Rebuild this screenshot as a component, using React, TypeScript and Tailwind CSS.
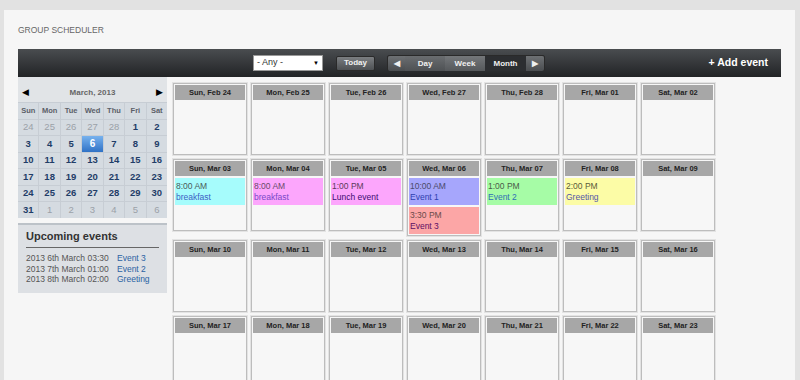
import React from "react"

type Ev = { time: string; name: string; bg: string; tc: string; nc: string }

const weeks: { label: string; events?: Ev[] }[][] = [
  [
    { label: "Sun, Feb 24" },
    { label: "Mon, Feb 25" },
    { label: "Tue, Feb 26" },
    { label: "Wed, Feb 27" },
    { label: "Thu, Feb 28" },
    { label: "Fri, Mar 01" },
    { label: "Sat, Mar 02" },
  ],
  [
    { label: "Sun, Mar 03", events: [{ time: "8:00 AM", name: "breakfast", bg: "bg-[#a6fcfc]", tc: "text-[#4a5a5a]", nc: "text-[#3d5fc4]" }] },
    { label: "Mon, Mar 04", events: [{ time: "8:00 AM", name: "breakfast", bg: "bg-[#fca6fc]", tc: "text-[#6a4a6a]", nc: "text-[#7a48c8]" }] },
    { label: "Tue, Mar 05", events: [{ time: "1:00 PM", name: "Lunch event", bg: "bg-[#fca6fc]", tc: "text-[#5a3a5a]", nc: "text-[#3c0c72]" }] },
    {
      label: "Wed, Mar 06",
      events: [
        { time: "10:00 AM", name: "Event 1", bg: "bg-[#a6a6fc]", tc: "text-[#4a4a6a]", nc: "text-[#2e3fb0]" },
        { time: "3:30 PM", name: "Event 3", bg: "bg-[#fca6a6]", tc: "text-[#6a4a4a]", nc: "text-[#5c1064]" },
      ],
    },
    { label: "Thu, Mar 07", events: [{ time: "1:00 PM", name: "Event 2", bg: "bg-[#a6fca6]", tc: "text-[#4a5a4a]", nc: "text-[#2f6fb4]" }] },
    { label: "Fri, Mar 08", events: [{ time: "2:00 PM", name: "Greeting", bg: "bg-[#fcfca6]", tc: "text-[#5a5a3a]", nc: "text-[#5555a8]" }] },
    { label: "Sat, Mar 09" },
  ],
  [
    { label: "Sun, Mar 10" },
    { label: "Mon, Mar 11" },
    { label: "Tue, Mar 12" },
    { label: "Wed, Mar 13" },
    { label: "Thu, Mar 14" },
    { label: "Fri, Mar 15" },
    { label: "Sat, Mar 16" },
  ],
  [
    { label: "Sun, Mar 17" },
    { label: "Mon, Mar 18" },
    { label: "Tue, Mar 19" },
    { label: "Wed, Mar 20" },
    { label: "Thu, Mar 21" },
    { label: "Fri, Mar 22" },
    { label: "Sat, Mar 23" },
  ],
]

const miniDays = [
  [24, 25, 26, 27, 28, 1, 2],
  [3, 4, 5, 6, 7, 8, 9],
  [10, 11, 12, 13, 14, 15, 16],
  [17, 18, 19, 20, 21, 22, 23],
  [24, 25, 26, 27, 28, 29, 30],
  [31, 1, 2, 3, 4, 5, 6],
]

const upcoming = [
  ["2013 6th March 03:30", "Event 3"],
  ["2013 7th March 01:00", "Event 2"],
  ["2013 8th March 02:00", "Greeting"],
]

function MiniCalendar() {
  return (
    <div className="bg-[#e1e4e7]">
      <div className="h-[25px] flex items-center justify-between px-[4px] pt-[6px]">
        <span className="text-[9px] text-black">◀</span>
        <span className="text-[8px] font-bold text-[#666]">March, 2013</span>
        <span className="text-[9px] text-black">▶</span>
      </div>
      <div className="grid grid-cols-7 gap-px bg-[#c7cdd4] border-t border-[#c7cdd4]">
        {["Sun", "Mon", "Tue", "Wed", "Thu", "Fri", "Sat"].map((d) => (
          <div key={d} className="h-[15.5px] bg-[#d5dbe1] flex items-center justify-center text-[7.5px] font-bold text-[#5b6068]">
            {d}
          </div>
        ))}
        {miniDays.map((row, ri) =>
          row.map((n, ci) => {
            const other = (ri === 0 && n > 20) || (ri === 5 && n < 20)
            const sel = ri === 1 && n === 6
            return (
              <div
                key={ri + "-" + ci}
                className={
                  sel
                    ? "h-[15.5px] flex items-center justify-center text-[10px] font-bold text-white bg-gradient-to-b from-[#78b2ee] to-[#2f72c6]"
                    : other
                    ? "h-[15.5px] flex items-center justify-center text-[9.5px] text-[#9ba1a8] bg-[#d5dbe1]"
                    : "h-[15.5px] flex items-center justify-center text-[9.5px] font-bold text-[#1f3d68] bg-[#d5dbe1]"
                }
              >
                {n}
              </div>
            )
          })
        )}
      </div>
    </div>
  )
}

function Upcoming() {
  return (
    <div className="mt-[5px] bg-[#dde0e4] border-t-2 border-[#bcc2c8] px-[8px] pt-[3px] pb-[8px]">
      <div className="text-[11px] font-bold text-[#333] pb-[3px] border-b border-[#666]">Upcoming events</div>
      <div className="pt-[5px]">
        {upcoming.map(([d, n]) => (
          <div key={d} className="flex text-[8.5px] leading-[10.5px]">
            <span className="w-[91px] text-[#555]">{d}</span>
            <span className="text-[#2b63a3]">{n}</span>
          </div>
        ))}
      </div>
    </div>
  )
}

function DayCell({ label, events }: { label: string; events?: Ev[] }) {
  return (
    <div className="border border-[#e3e3e3] bg-[#f7f7f7]">
      <div className="border border-[#bdbdbd] min-h-[72px] p-px">
        <div className="h-[15px] bg-[#a7a7a7] flex items-center justify-center text-[7.5px] font-bold text-[#222]">
          {label}
        </div>
        {events && (
          <div className="mt-[2px] flex flex-col gap-[2px]">
            {events.map((e) => (
              <div key={e.name} className={"h-[27px] px-px pt-[3px] text-[8.5px] leading-[10.5px] " + e.bg}>
                <div className={e.tc}>{e.time}</div>
                <div className={e.nc}>{e.name}</div>
              </div>
            ))}
          </div>
        )}
      </div>
    </div>
  )
}

function Toolbar() {
  const btn = "h-[15px] flex items-center justify-center text-[8px] font-bold text-[#f0f0f0]"
  return (
    <div className="h-[28px] bg-gradient-to-b from-[#4a4d50] to-[#222426] flex items-center pl-[235px] pr-[13px]">
      <div className="w-[70px] h-[16px] bg-white border border-[#999] flex items-center justify-between px-[3px]">
        <span className="text-[9px] text-[#333]">- Any -</span>
        <span className="text-[6px] text-black">▼</span>
      </div>
      <div className={btn + " ml-[13px] w-[39px] rounded-[2px] border border-[#2a2a2a] bg-gradient-to-b from-[#7b7e81] to-[#4e5154]"}>Today</div>
      <div className="ml-[12px] flex h-[16px] rounded-[2px] border border-[#2a2a2a]">
        <div className={btn + " w-[17px] bg-gradient-to-b from-[#6e7174] to-[#4a4d50] text-[6px] rounded-l-[2px]"}>◀</div>
        <div className={btn + " w-[40px] bg-gradient-to-b from-[#6a6d70] to-[#4e5154]"}>Day</div>
        <div className={btn + " w-[40px] bg-gradient-to-b from-[#74777a] to-[#55585b]"}>Week</div>
        <div className={btn + " w-[41px] bg-[#2c2e31]"}>Month</div>
        <div className={btn + " w-[18px] bg-gradient-to-b from-[#6e7174] to-[#4a4d50] text-[6px] rounded-r-[2px]"}>▶</div>
      </div>
      <div className="ml-auto text-[10.5px] font-bold text-white">+ Add event</div>
    </div>
  )
}

export default function App() {
  return (
    <div className="w-[800px] h-[380px] overflow-hidden bg-[#e2e2e2] pt-[10px] pl-[4px] pr-[5px] font-['Liberation_Sans',Arial,sans-serif]">
      <div className="h-full bg-[#f6f6f6] pl-[14px] pr-[14px]">
        <div className="h-[39px] flex items-center pt-[1px] text-[8.5px] text-[#666]">GROUP SCHEDULER</div>
        <Toolbar />
        <div className="flex">
          <div className="w-[149px]">
            <MiniCalendar />
            <Upcoming />
          </div>
          <div className="ml-[5px] mt-[5px] flex flex-col gap-[2px]">
            {weeks.map((w, i) => (
              <div key={i} className="grid grid-cols-[repeat(7,76px)] gap-[2px] items-start">
                {w.map((d) => (
                  <DayCell key={d.label} label={d.label} events={d.events} />
                ))}
              </div>
            ))}
          </div>
        </div>
      </div>
    </div>
  )
}
